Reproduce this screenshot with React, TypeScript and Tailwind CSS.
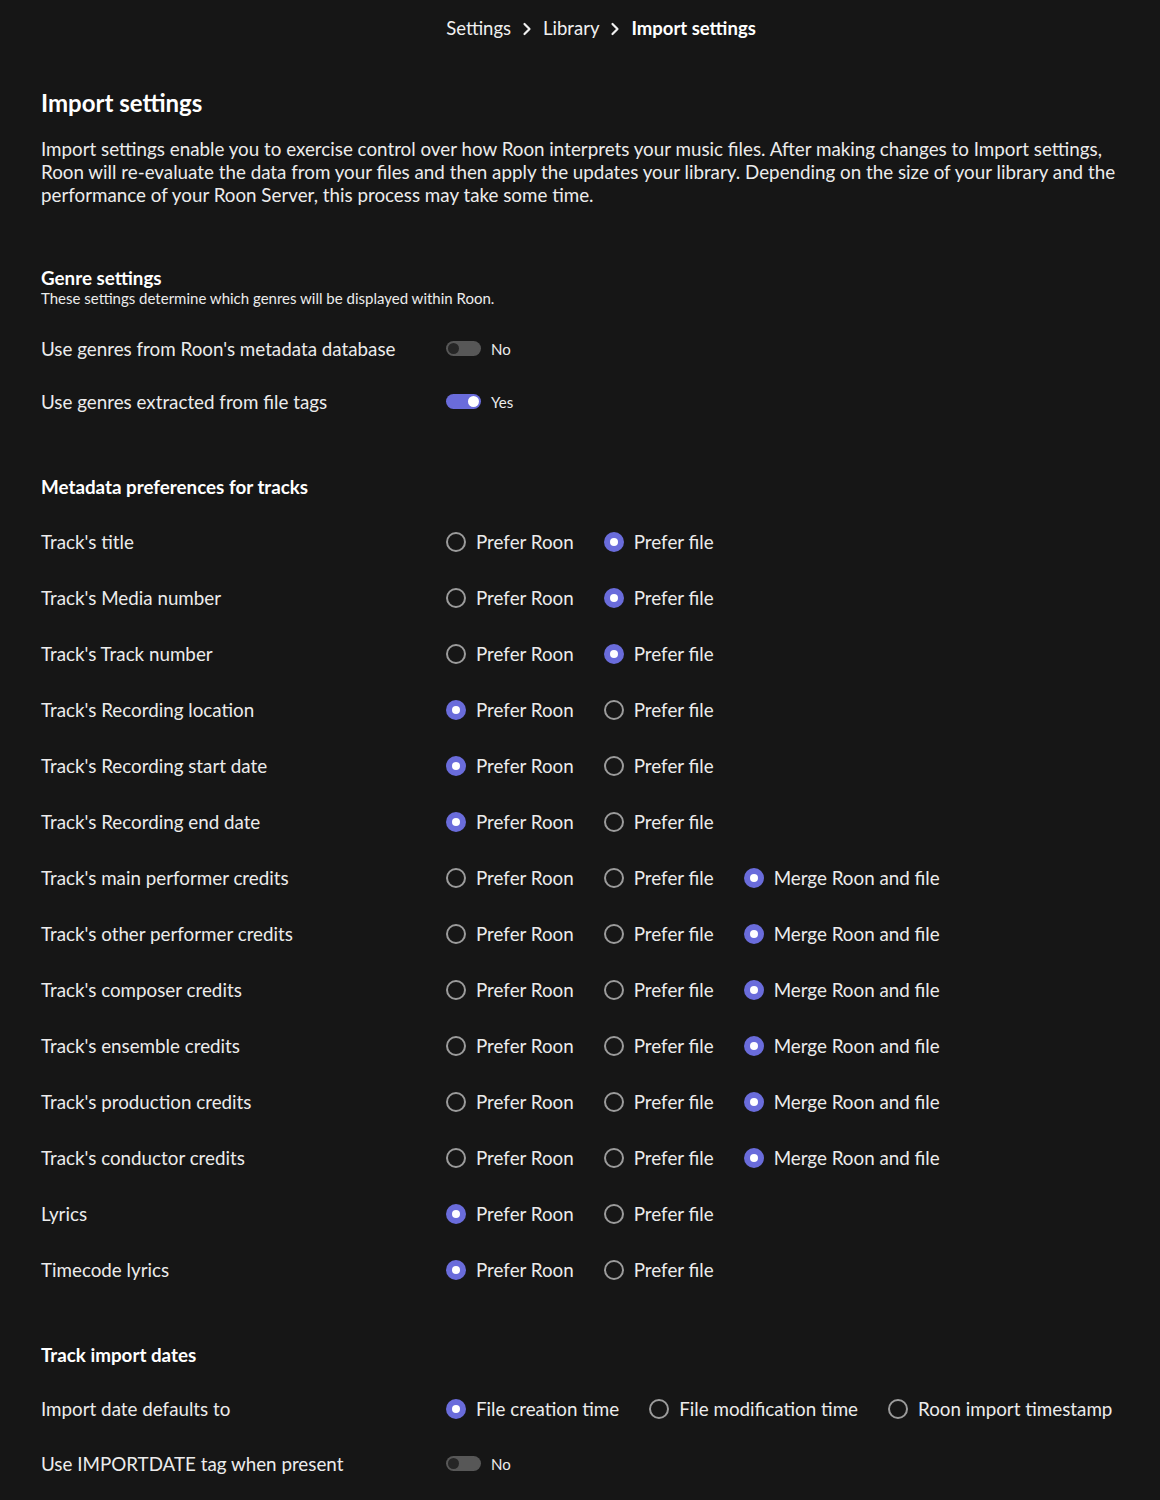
import React from "react";

const ACCENT = "bg-[#6a6cdb]";

function Chevron() {
  return (
    <svg width="10" height="14" viewBox="0 0 10 14" className="mx-[11px]">
      <path d="M2.5 2 L7.5 7 L2.5 12" fill="none" stroke="#f0f0f0" strokeWidth="2.2" strokeLinecap="round" strokeLinejoin="round" />
    </svg>
  );
}

function Radio({ checked }: { checked: boolean }) {
  if (checked) {
    return (
      <span className={`flex h-[20px] w-[20px] shrink-0 items-center justify-center rounded-full ${ACCENT}`}>
        <span className="h-[8px] w-[8px] rounded-full bg-white" />
      </span>
    );
  }
  return <span className="h-[20px] w-[20px] shrink-0 rounded-full border-2 border-[#9b9b9b]" />;
}

function Option({ label, checked }: { label: string; checked: boolean }) {
  return (
    <div className="flex items-center gap-[10px]">
      <Radio checked={checked} />
      <span className="text-[18.8px] leading-[22px] text-[#ececec]">{label}</span>
    </div>
  );
}

function Toggle({ on }: { on: boolean }) {
  return (
    <div className="flex items-center gap-[10px]">
      {on ? (
        <span className={`flex h-[15px] w-[35px] items-center justify-end rounded-full pr-[2px] ${ACCENT}`}>
          <span className="h-[11px] w-[11px] rounded-full bg-white" />
        </span>
      ) : (
        <span className="flex h-[15px] w-[35px] items-center rounded-full bg-[#575757] pl-[2px]">
          <span className="h-[11px] w-[11px] rounded-full bg-[#262626]" />
        </span>
      )}
      <span className="text-[15px] leading-[18px] text-[#ececec]">{on ? "Yes" : "No"}</span>
    </div>
  );
}

function Row({ label, h, children }: { label: string; h: string; children: React.ReactNode }) {
  return (
    <div className={`flex items-center ${h}`}>
      <div className="w-[405px] shrink-0 text-[18.8px] leading-[22px] text-[#ececec]">{label}</div>
      <div className="flex items-center gap-[30px]">{children}</div>
    </div>
  );
}

const tracks: [string, number, boolean][] = [
  ["Track's title", 1, false],
  ["Track's Media number", 1, false],
  ["Track's Track number", 1, false],
  ["Track's Recording location", 0, false],
  ["Track's Recording start date", 0, false],
  ["Track's Recording end date", 0, false],
  ["Track's main performer credits", 2, true],
  ["Track's other performer credits", 2, true],
  ["Track's composer credits", 2, true],
  ["Track's ensemble credits", 2, true],
  ["Track's production credits", 2, true],
  ["Track's conductor credits", 2, true],
  ["Lyrics", 0, false],
  ["Timecode lyrics", 0, false],
];

export default function App() {
  return (
    <div className="min-h-[1500px] bg-[#161616] px-[41px] font-['Lato',sans-serif] text-white">
      <div className="flex h-[57px] items-center justify-center pl-[42px] text-[18.5px] text-[#f0f0f0]">
        <span>Settings</span>
        <Chevron />
        <span>Library</span>
        <Chevron />
        <span className="font-bold text-white">Import settings</span>
      </div>

      <h1 className="mt-[30px] text-[24px] font-bold leading-[32px] text-white">Import settings</h1>
      <p className="mt-[18px] text-[18.8px] leading-[23px] text-[#ececec]">
        Import settings enable you to exercise control over how Roon interprets your music files. After making changes to Import settings, Roon will re-evaluate the data from your files and then apply the updates your library. Depending on the size of your library and the performance of your Roon Server, this process may take some time.
      </p>

      <h2 className="mt-[61px] text-[18.8px] font-bold leading-[22px] text-white">Genre settings</h2>
      <div className="text-[15px] leading-[18px] text-[#ececec]">These settings determine which genres will be displayed within Roon.</div>
      <div className="mt-[15px]">
        <Row label="Use genres from Roon's metadata database" h="h-[53px]">
          <Toggle on={false} />
        </Row>
        <Row label="Use genres extracted from file tags" h="h-[53px]">
          <Toggle on={true} />
        </Row>
      </div>

      <h2 className="mt-[48px] text-[18.8px] font-bold leading-[22px] text-white">Metadata preferences for tracks</h2>
      <div className="mt-[16px]">
        {tracks.map(([label, sel, merge]) => (
          <Row key={label} label={label} h="h-[56px]">
            <Option label="Prefer Roon" checked={sel === 0} />
            <Option label="Prefer file" checked={sel === 1} />
            {merge && <Option label="Merge Roon and file" checked={sel === 2} />}
          </Row>
        ))}
      </div>

      <h2 className="mt-[46px] text-[18.8px] font-bold leading-[22px] text-white">Track import dates</h2>
      <div className="mt-[15px]">
        <Row label="Import date defaults to" h="h-[55px]">
          <Option label="File creation time" checked={true} />
          <Option label="File modification time" checked={false} />
          <Option label="Roon import timestamp" checked={false} />
        </Row>
        <Row label="Use IMPORTDATE tag when present" h="h-[55px]">
          <Toggle on={false} />
        </Row>
      </div>
    </div>
  );
}
